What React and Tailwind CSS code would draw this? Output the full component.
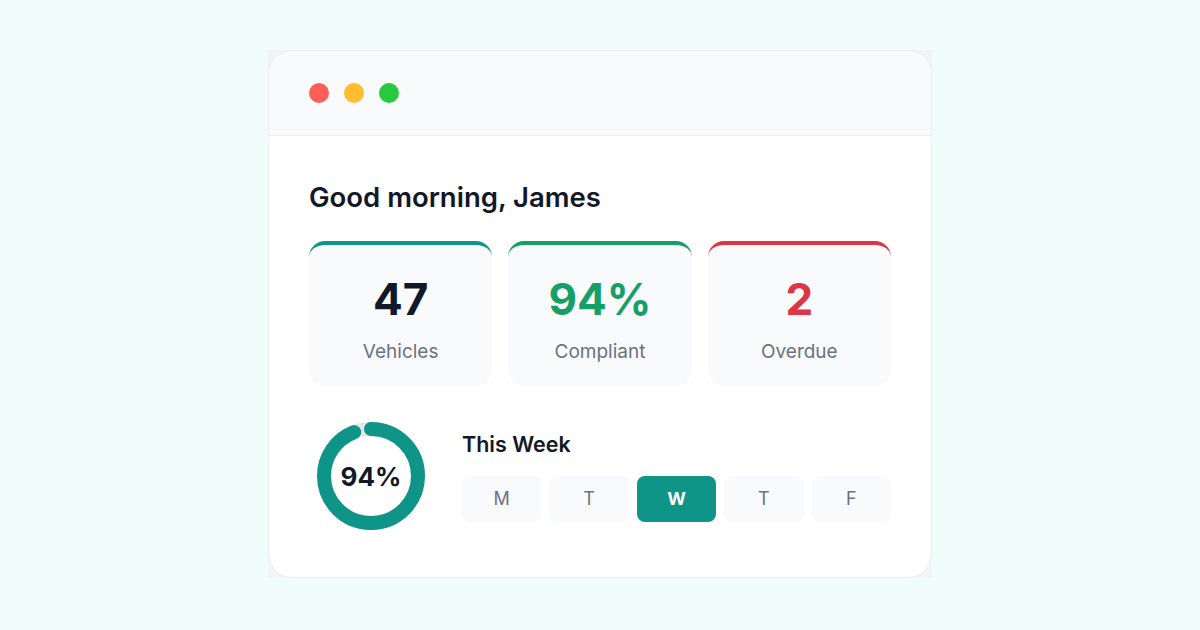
import React from "react";

function Stat({ value, label, color, border }) {
  return (
    <div className={`flex-1 h-[145px] rounded-2xl border-t-4 ${border} bg-[#f8fafc] flex flex-col items-center pt-[30px]`}>
      <div className={`text-[44px] leading-[48px] font-bold ${color}`}>{value}</div>
      <div className="mt-[17px] text-[19px] leading-[24px] text-[#6b7280]">{label}</div>
    </div>
  );
}

function Donut() {
  const r = 47;
  const c = 2 * Math.PI * r;
  const len = c * 0.94;
  return (
    <div className="relative w-[124px] h-[124px] shrink-0">
      <svg width="124" height="124" viewBox="0 0 124 124">
        <circle cx="62" cy="62" r={r} fill="none" stroke="#e5e7eb" strokeWidth="14" />
        <circle
          cx="62"
          cy="62"
          r={r}
          fill="none"
          stroke="#0f9488"
          strokeWidth="14"
          strokeLinecap="round"
          strokeDasharray={`${len} ${c}`}
          transform="rotate(-90 62 62)"
        />
      </svg>
      <div className="absolute inset-0 flex items-center justify-center text-[26px] font-bold text-[#111827]">94%</div>
    </div>
  );
}

export default function App() {
  const days = ["M", "T", "W", "T", "F"];
  return (
    <div className="w-[1200px] h-[630px] bg-[#f0fdfa] flex justify-center pt-[50px]" style={{ fontFamily: "Inter, 'Noto Sans', sans-serif" }}>
      <div className="w-[664px] h-[528px] bg-[#f3f4f6]">
        <div className="w-full h-full rounded-3xl bg-white border border-[#eeeeee] overflow-hidden flex flex-col">
          <div className="h-[85px] bg-[#f9fafb] border-b border-[#eeeff1] flex items-center gap-[15px] pl-[40px]">
            <div className="w-5 h-5 rounded-full bg-[#ff5f57]" />
            <div className="w-5 h-5 rounded-full bg-[#febc2e]" />
            <div className="w-5 h-5 rounded-full bg-[#28c840]" />
          </div>
          <div className="px-[40px] pt-[39px]">
            <div className="text-[27.5px] leading-[44px] font-semibold text-[#111827]">Good morning, James</div>
            <div className="mt-[22px] flex gap-4">
              <Stat value="47" label="Vehicles" color="text-[#111827]" border="border-[#0f9488]" />
              <Stat value="94%" label="Compliant" color="text-[#179f68]" border="border-[#179f68]" />
              <Stat value="2" label="Overdue" color="text-[#dc3545]" border="border-[#dc3545]" />
            </div>
            <div className="mt-[28px] flex items-center gap-[29px]">
              <Donut />
              <div className="flex-1 flex flex-col">
                <div className="text-[21.5px] leading-[26px] font-semibold text-[#111827]">This Week</div>
                <div className="mt-[19px] flex gap-2">
                  {days.map((d, i) => (
                    <div
                      key={i}
                      className={
                        i === 2
                          ? "flex-1 h-[46px] rounded-lg bg-[#0f9488] text-white font-bold text-[18px] flex items-center justify-center"
                          : "flex-1 h-[46px] rounded-lg bg-[#f8fafc] text-[#6b7280] text-[18px] flex items-center justify-center"
                      }
                    >
                      {d}
                    </div>
                  ))}
                </div>
              </div>
            </div>
          </div>
        </div>
      </div>
    </div>
  );
}
